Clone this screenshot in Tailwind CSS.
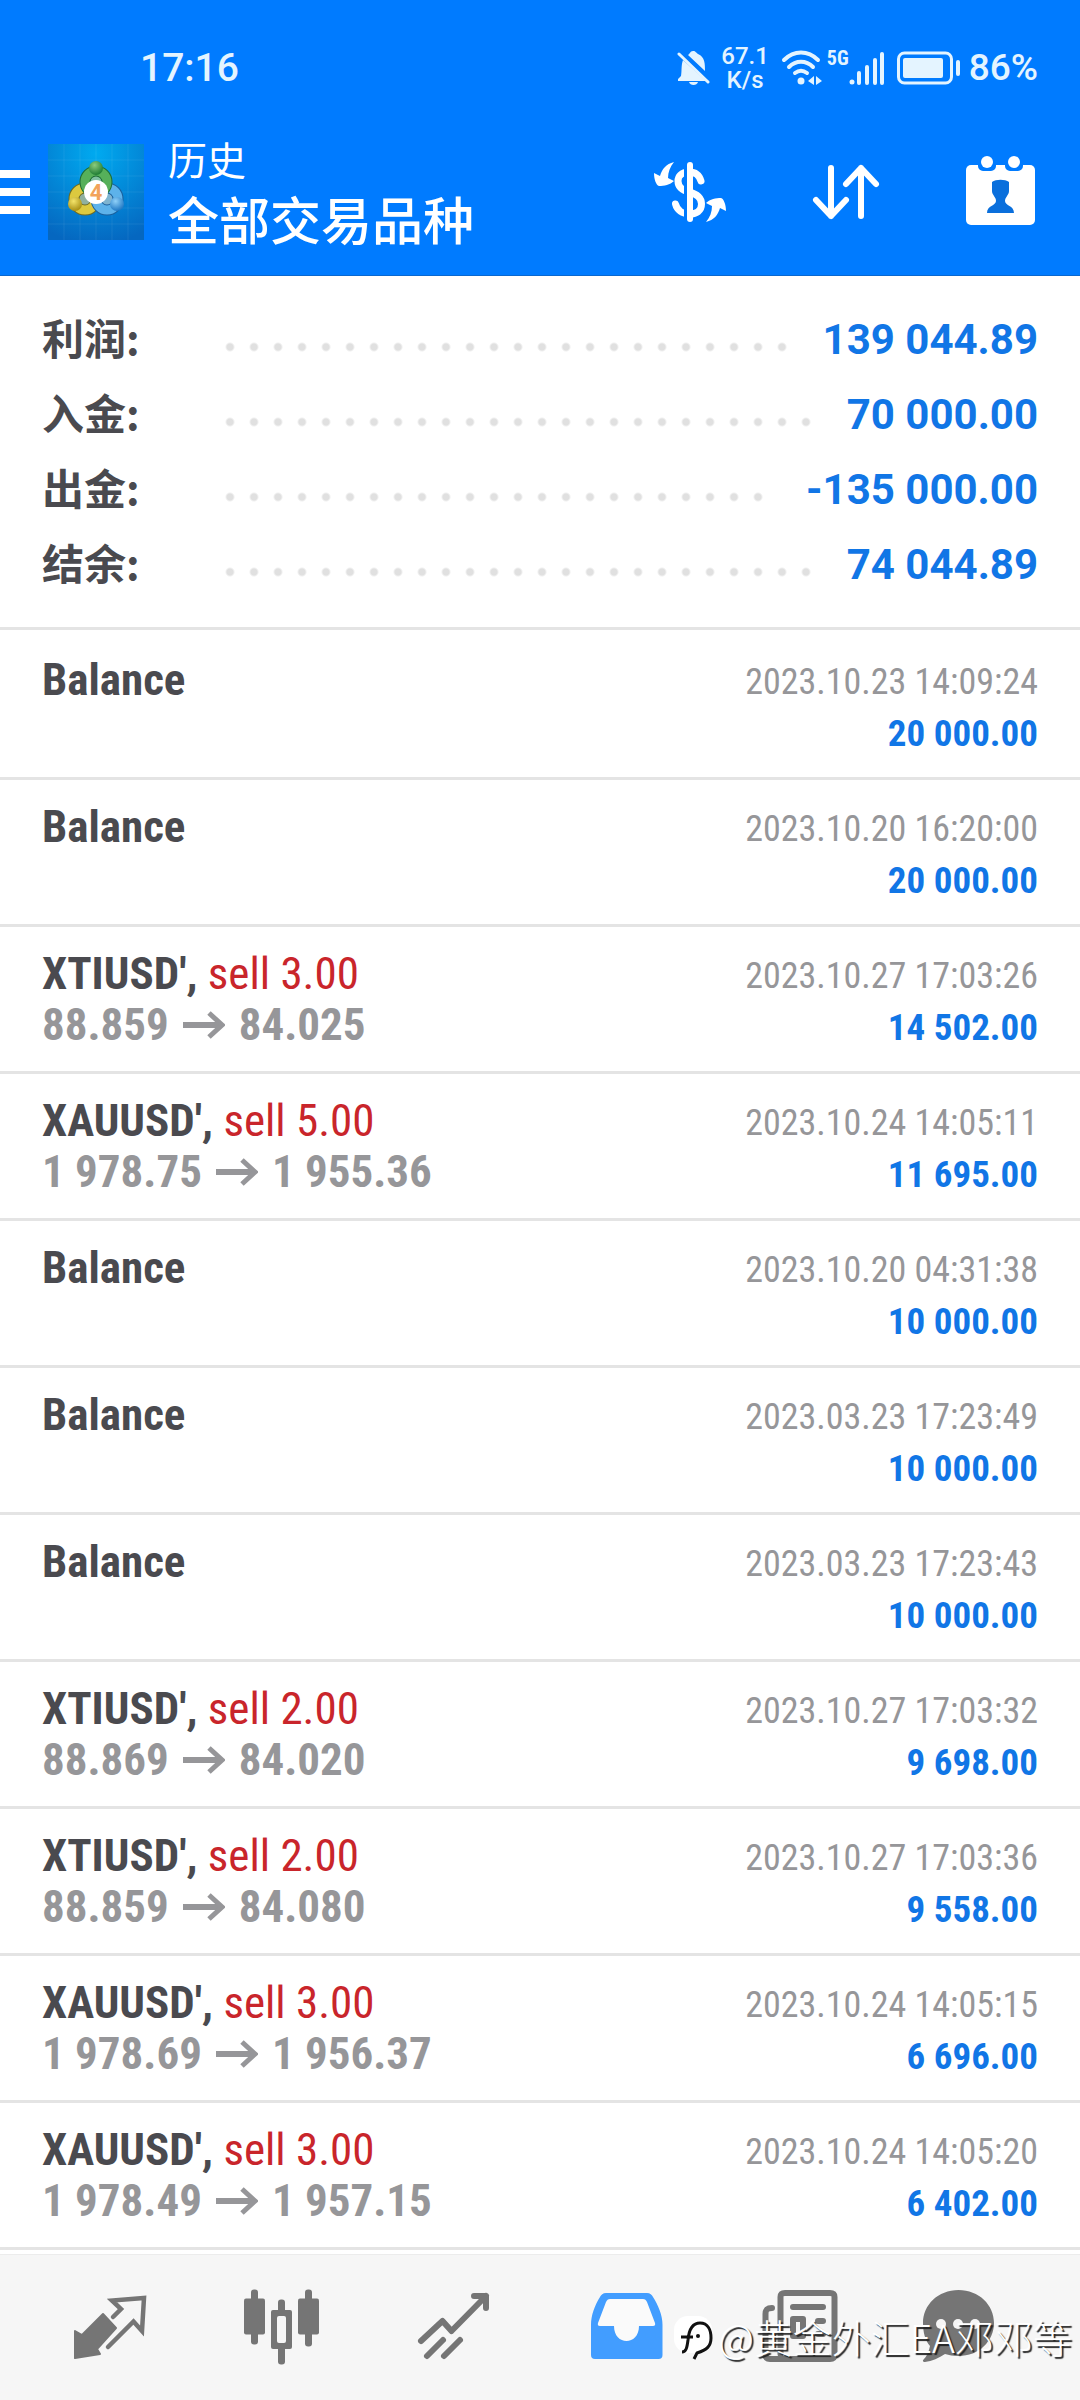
<!DOCTYPE html>
<html lang="zh-CN">
<head>
<meta charset="utf-8">
<meta name="viewport" content="width=device-width, initial-scale=1">
<title>历史</title>
<script src="https://cdn.jsdelivr.net/npm/@tailwindcss/browser@4"></script>
</head>
<body class="relative flex min-h-screen flex-col bg-white font-['Roboto','Noto_Sans_CJK_SC',sans-serif] text-[#4a4a4f]">

<header class="border-b border-[#0a68cf] bg-[#007bff] pb-[23px] text-white">
  <!-- Status bar -->
  <div class="flex h-[132px] items-center pt-1 pr-[42px] pl-[140px] text-[#e4f4ff]">
    <span class="text-[39px] font-medium">17:16</span>
    <div class="ml-auto flex items-center">
      <svg class="mr-[10px] h-9 w-[34px]" viewBox="0 0 34 36" fill="currentColor" aria-hidden="true">
        <path d="M6 10 L29 31 H1 V29 L4 26 C5 21 4 15 6 10Z"/><path d="M11 5 C13 4 13 1 16 1 C19 1 19 3 21 4 C28 7 28 14 28 21 L11 5Z"/><path d="M12 32 h9 c-1 4 -8 4 -9 0Z"/>
        <path d="M5 2 L34 30" stroke="#007bff" stroke-width="3"/><path d="M2 4 L31 32" stroke="currentColor" stroke-width="3" stroke-linecap="round"/>
      </svg>
      <div class="mr-3 flex flex-col items-center text-[24px] leading-6 font-medium"><span>67.1</span><span>K/s</span></div>
      <svg class="mr-1 h-9 w-[42px]" viewBox="0 0 42 36" fill="none" stroke="currentColor" stroke-width="4" stroke-linecap="round" aria-hidden="true">
        <path d="M3 10 C13 0 27 0 37 10"/><path d="M8 17 C15 10 25 10 32 17"/><path d="M14 23 C18 20 22 20 26 23"/><circle cx="20" cy="31" r="3.500" fill="currentColor" stroke="none"/>
        <path d="M33 26 v9 l-6 -4Z M35 26 v9 l6 -4Z" fill="currentColor" stroke="none"/>
      </svg>
      <span class="mb-5 font-['Roboto_Condensed',sans-serif] text-[20px] leading-4 font-bold">5G</span>
      <svg class="mr-3 h-9 w-9" viewBox="0 0 36 36" fill="currentColor" aria-hidden="true">
        <circle cx="3" cy="32" r="2.500"/><rect x="8" y="21" width="4" height="14" rx="2"/><rect x="16" y="15" width="4" height="20" rx="2"/><rect x="24" y="8" width="4" height="27" rx="2"/><rect x="31" y="2" width="4" height="33" rx="2"/>
      </svg>
      <svg class="mr-2 h-9 w-16" viewBox="0 0 64 36" aria-hidden="true">
        <rect x="1.500" y="3" width="53" height="30" rx="6" fill="none" stroke="currentColor" stroke-width="3"/><rect x="6" y="8" width="40" height="20" rx="2" fill="currentColor"/><rect x="59" y="10" width="4" height="16" rx="2" fill="currentColor"/>
      </svg>
      <span class="text-[37px] font-medium">86%</span>
    </div>
  </div>

  <!-- Toolbar -->
  <div class="flex h-30 items-center pr-8">
    <button type="button" aria-label="菜单" class="flex h-24 w-12 flex-col justify-center gap-[10px]">
      <span class="h-2 w-[30px] bg-white"></span><span class="h-2 w-[30px] bg-white"></span><span class="h-2 w-[30px] bg-white"></span>
    </button>
    <svg class="h-24 w-24" viewBox="0 0 96 96" role="img" aria-label="MetaTrader 4">
      <defs>
        <radialGradient id="sky" cx="50%" cy="10%" r="95%"><stop offset="0" stop-color="#00aaf0"/><stop offset="1" stop-color="#0567c0"/></radialGradient>
        <radialGradient id="green" cx="40%" cy="30%" r="70%"><stop offset="0" stop-color="#8ccb7c"/><stop offset="1" stop-color="#1f7d35"/></radialGradient>
        <radialGradient id="gold" cx="40%" cy="30%" r="70%"><stop offset="0" stop-color="#f4e46a"/><stop offset="1" stop-color="#a88f14"/></radialGradient>
        <radialGradient id="blue" cx="40%" cy="30%" r="70%"><stop offset="0" stop-color="#8fd0f8"/><stop offset="1" stop-color="#1f78c4"/></radialGradient>
      </defs>
      <rect width="96" height="96" fill="url(#sky)"/>
      <path d="M16 0V96M32 0V96M48 0V96M64 0V96M80 0V96M0 16H96M0 32H96M0 48H96M0 64H96M0 80H96" stroke="#fff" stroke-opacity=".07"/>
      <circle cx="37" cy="55" r="11" fill="#8fb0a0" stroke="#6f6a20" stroke-width="11"/><circle cx="37" cy="55" r="11" fill="none" stroke="#dcc93f" stroke-width="9"/>
      <circle cx="59" cy="55" r="11" fill="#7fb4d0" stroke="#1a5f9c" stroke-width="11"/><circle cx="59" cy="55" r="11" fill="none" stroke="#5db2ea" stroke-width="9"/>
      <circle cx="48" cy="38" r="11" fill="#7fc0a0" stroke="#1c6b35" stroke-width="11"/><circle cx="48" cy="38" r="11" fill="none" stroke="#56b05a" stroke-width="9"/>
      <circle cx="48" cy="24" r="7" fill="url(#green)"/><circle cx="27" cy="60" r="7" fill="url(#gold)"/><circle cx="69" cy="60" r="7" fill="url(#blue)"/>
      <circle cx="48" cy="48" r="12" fill="#fff"/>
      <text x="48" y="56" text-anchor="middle" font-family="Roboto, sans-serif" font-size="22" font-weight="700" fill="#f2a35a">4</text>
    </svg>
    <div class="ml-6 pt-1">
      <p class="text-[39px] leading-[58px]">历史</p>
      <h1 class="text-[51px] leading-[64px] font-medium">全部交易品种</h1>
    </div>
    <div class="ml-auto flex gap-[60px]">
      <button type="button" aria-label="交易品种" class="h-24 w-24">
        <svg class="h-24 w-24" viewBox="0 0 96 96" aria-hidden="true">
          <path d="M61 37C59 30 54 28 49 28C41 28 38 33 38 37C38 44 44 47 50 48.500C57 50 61.500 54 61.500 60C61.500 67 56 70 50 70C42 70 37 66 35.500 60" fill="none" stroke="#fff" stroke-width="7" stroke-linecap="round"/>
          <path d="M45.500 20V76" stroke="#007bff" stroke-width="3"/><path d="M50 21V75" stroke="#fff" stroke-width="6" stroke-linecap="round"/>
          <path id="swap" d="M34 18C26 20 22 25 20 32L14 29C14 35 16 41 19 42C24 42 30 41 34 37L28 34C28 28 30 23 34 18Z" fill="#fff"/>
          <use href="#swap" transform="rotate(180 50 48)"/>
        </svg>
      </button>
      <button type="button" aria-label="排序" class="h-24 w-24">
        <svg class="h-24 w-24" viewBox="0 0 96 96" fill="none" stroke="#fff" stroke-width="6" stroke-linecap="round" stroke-linejoin="round" aria-hidden="true">
          <path d="M35 24V72M20 56L35 72L50 56M65 72V24M50 40L65 24L80 40"/>
        </svg>
      </button>
      <button type="button" aria-label="时段" class="h-24 w-24">
        <svg class="h-24 w-24" viewBox="0 0 96 96" aria-hidden="true">
          <rect x="14" y="21" width="69" height="60" rx="5" fill="#fff"/>
          <path d="M26 12H44V22a5 5 0 0 1 -5 5H31a5 5 0 0 1 -5 -5ZM53 12H71V22a5 5 0 0 1 -5 5H58a5 5 0 0 1 -5 -5Z" fill="#007bff"/>
          <circle cx="35" cy="18" r="6" fill="#fff"/><circle cx="62" cy="18" r="6" fill="#fff"/>
          <path d="M40 38C44 35 53 35 57 38V47C57 51 53 53 53 57C53 62 62 61 62 69H35C35 61 44 62 44 57C44 53 40 51 40 47Z" fill="#0a6fdc"/>
        </svg>
      </button>
    </div>
  </div>
</header>

<main class="flex-1">
  <dl id="summary" class="border-b-3 border-[#e4e4e4] pt-[26px] pb-[25px] font-bold"></dl>
  <ul id="deals" class="pt-[3px] font-['Roboto_Condensed','Roboto',sans-serif]"></ul>
</main>

<nav class="mt-1 flex h-[146px] items-center border-t border-[#ececec] bg-[#f6f6f6] px-6 text-[#757575]">
  <a href="#quotes" aria-label="行情" class="flex flex-1 justify-center">
    <svg class="h-24 w-24" viewBox="0 0 96 96" fill="none" stroke="currentColor" aria-hidden="true">
      <path d="M13 51L20 55L41 34L54 48L35 69L38 74L13 78Z" fill="currentColor" stroke-width="2" stroke-linejoin="round"/>
      <path d="M51 37L59 29L50 20.500L82 18L80 51L71.500 41.500L46 67" stroke-width="4.500" stroke-linecap="round"/>
    </svg>
  </a>
  <a href="#charts" aria-label="图表" class="flex flex-1 justify-center">
    <svg class="h-24 w-24" viewBox="0 0 96 96" fill="currentColor" aria-hidden="true">
      <rect x="10" y="18.500" width="21" height="36" rx="2"/><rect x="17" y="9.500" width="7" height="55" rx="3"/>
      <rect x="64" y="18.500" width="21" height="36" rx="2"/><rect x="71" y="9.500" width="7" height="57" rx="3"/>
      <rect x="37" y="30" width="21" height="39" rx="2"/><rect x="44" y="19.500" width="7" height="65" rx="3"/><rect x="43" y="36" width="9" height="27" rx="2" fill="#f6f6f6"/>
    </svg>
  </a>
  <a href="#trade" aria-label="交易" class="flex flex-1 justify-center">
    <svg class="h-24 w-24" viewBox="0 0 96 96" fill="none" stroke="currentColor" stroke-width="6" stroke-linecap="round" stroke-linejoin="round" aria-hidden="true">
      <path d="M15 61L36.500 41L45.500 51L80 16M68 16H80V28M21 76L37 60M38 76L54 60"/>
    </svg>
  </a>
  <a href="#history" aria-label="历史" aria-current="page" class="flex flex-1 justify-center text-[#429dff]">
    <svg class="h-24 w-24" viewBox="0 0 96 96" aria-hidden="true">
      <path d="M28 13H69C72 13 74 15 75 17C80 25 84.500 35 84.500 45V75a4 4 0 0 1 -4 4H17a4 4 0 0 1 -4 -4V45C13 35 17 25 22 17C23 15 25 13 28 13Z" fill="currentColor"/>
      <path d="M32 19H65C67 19 68 20 69 22L77 43C77.500 45 77 46 75 46H61C61 66 36 66 36 46H22C20 46 19.500 45 20 43L28 22C29 20 30 19 32 19Z" fill="#fafafa"/>
    </svg>
  </a>
  <a href="#news" aria-label="新闻" class="flex flex-1 justify-center">
    <svg class="h-24 w-24" viewBox="0 0 96 96" fill="none" stroke="currentColor" stroke-width="6" stroke-linecap="round" stroke-linejoin="round" aria-hidden="true">
      <path d="M22 28C17 28 15.500 30 15.500 34V74C15.500 78 17 79 20 79H80C83 79 84.500 78 84.500 75V17C84.500 14 83 13 80 13H35C32 13 30.500 14 30.500 17V74"/><path d="M43 27H73M68 41H73M68 54H73"/><rect x="43" y="39" width="10" height="17"/>
    </svg>
  </a>
  <a href="#messages" aria-label="消息" class="flex flex-1 justify-center">
    <svg class="h-24 w-24" viewBox="0 0 96 96" aria-hidden="true">
      <path d="M36.500 10C57 10 72 25 72 43C72 61 57 76 36.500 76C31 76 27 75 23 74C17 78 10 81 3 82C1 82 0 81 2 79C6 75 7 70 8 66C3 60 1 52 1 43C1 25 16 10 36.500 10Z" fill="currentColor"/>
      <g fill="#f6f6f6"><circle cx="19" cy="44" r="5"/><circle cx="36" cy="44" r="5"/><circle cx="53" cy="44" r="5"/></g>
    </svg>
  </a>
</nav>

<!-- Author mark laid over the tab bar -->
<div class="absolute right-2 bottom-10 flex items-center gap-1 text-white">
  <svg class="h-12 w-10" viewBox="0 0 40 48" aria-hidden="true">
    <rect x="0" y="4" width="38" height="37" rx="14" fill="#fff"/>
    <path d="M8 40C12 40 13 36 14 28C15 17 19 11 26 11C34 11 37 18 37 26C37 34 33 38 23 41L20 47" fill="none" stroke="#111" stroke-width="3"/><path d="M7 25H19" stroke="#111" stroke-width="3"/><circle cx="24" cy="24" r="2" fill="#111"/>
  </svg>
  <span class="font-['Noto_Sans_CJK_SC',sans-serif] text-[39px] leading-[48px] font-light [text-shadow:2px_2px_1px_#222]">@黄金外汇EA邓邓等</span>
</div>

<script>
const summary = [["利润", "139 044.89"], ["入金", "70 000.00"], ["出金", "-135 000.00"], ["结余", "74 044.89"]];
const deals = [
  ["Balance", "", "", "2023.10.23 14:09:24", "20 000.00"],
  ["Balance", "", "", "2023.10.20 16:20:00", "20 000.00"],
  ["XTIUSD'", "3.00", "88.859|84.025", "2023.10.27 17:03:26", "14 502.00"],
  ["XAUUSD'", "5.00", "1 978.75|1 955.36", "2023.10.24 14:05:11", "11 695.00"],
  ["Balance", "", "", "2023.10.20 04:31:38", "10 000.00"],
  ["Balance", "", "", "2023.03.23 17:23:49", "10 000.00"],
  ["Balance", "", "", "2023.03.23 17:23:43", "10 000.00"],
  ["XTIUSD'", "2.00", "88.869|84.020", "2023.10.27 17:03:32", "9 698.00"],
  ["XTIUSD'", "2.00", "88.859|84.080", "2023.10.27 17:03:36", "9 558.00"],
  ["XAUUSD'", "3.00", "1 978.69|1 956.37", "2023.10.24 14:05:15", "6 696.00"],
  ["XAUUSD'", "3.00", "1 978.49|1 957.15", "2023.10.24 14:05:20", "6 402.00"]
];
const arrow = `<svg class="h-7 w-[42px]" viewBox="0 0 42 28" fill="none" stroke="currentColor" role="img" aria-label="→"><path d="M0 14H38" stroke-width="6"/><path d="M26 2L39 14L26 26" stroke-width="5"/></svg>`;
document.getElementById("summary").innerHTML = summary.map(([label, value]) => `
  <div class="flex h-[75px] items-center px-[42px]">
    <dt class="w-44 pb-[6px] font-['Noto_Sans_CJK_SC',sans-serif] text-[42px]">${label}:</dt>
    <dd class="flex flex-1 items-center gap-8">
      <span class="mt-[14px] h-6 flex-1 bg-[radial-gradient(circle,#e0e0e0_3px,transparent_5px)] bg-[length:24px_24px] bg-repeat-x"></span>
      <span class="text-[42px] text-[#1176e6]">${value}</span>
    </dd>
  </div>`).join("");
document.getElementById("deals").innerHTML = deals.map(([name, lots, prices, time, amount]) => `
  <li class="flex h-[147px] justify-between border-b-3 border-[#e4e4e4] px-[42px] pt-[21px]">
    <div class="text-[45px] leading-[51px] font-bold">
      <p>${name}${lots ? `, <span class="font-normal text-[#c9252b]">sell ${lots}</span>` : ""}</p>
      ${prices ? `<p class="flex items-center gap-[14px] text-[#969699]">${prices.split("|").map(price => `<span>${price}</span>`).join(arrow)}</p>` : ""}
    </div>
    <div class="pt-[3px] text-right leading-[51px]">
      <p class="text-[36px] text-[#969699]"><time>${time}</time></p>
      <p class="text-[37px] font-bold text-[#1176e6]">${amount}</p>
    </div>
  </li>`).join("");
</script>
</body>
</html>
